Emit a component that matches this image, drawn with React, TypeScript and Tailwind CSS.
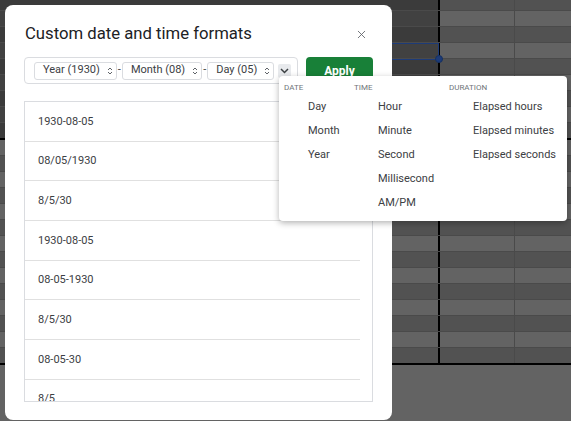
import { X } from "lucide-react";

const FONT = { fontFamily: "Roboto, 'Noto Sans', Arial, sans-serif" };

const formats = [
    "1930-08-05",
    "08/05/1930",
    "8/5/30",
    "1930-08-05",
    "08-05-1930",
    "8/5/30",
    "08-05-30",
    "8/5",
];

const menu = [
    { title: "DATE", width: "w-[70px]", items: ["Day", "Month", "Year"] },
    { title: "TIME", width: "w-[95px]", items: ["Hour", "Minute", "Second", "Millisecond", "AM/PM"] },
    { title: "DURATION", width: "w-[110px]", items: ["Elapsed hours", "Elapsed minutes", "Elapsed seconds"] },
];

function UpDown() {
    return (
        <svg width="6" height="10" viewBox="0 0 6 10" fill="none" stroke="#5f6368" strokeWidth="1" className="ml-[7px] shrink-0">
            <path d="M1 4 L3 2 L5 4" />
            <path d="M1 6 L3 8 L5 6" />
        </svg>
    );
}

function Chip({ label }: { label: string }) {
    return (
        <div className="flex shrink-0 items-center h-[18px] pl-[8px] pr-[3px] border border-[#dadce0] rounded-[3px] text-[11px] text-[#3c4043] bg-white whitespace-nowrap">
            <span>{label}</span>
            <UpDown />
        </div>
    );
}

// dimmed spreadsheet behind the modal
function SheetBackground() {
    const rows = Array.from({ length: 23 }, (_, i) => i);
    return (
        <div className="absolute inset-0 flex flex-col bg-[#636363]">
            {rows.map(i => {
                const light = i % 2 === 1;
                const frozen = i <= 8;
                const heavy = i === 8 || i === 22;
                const h = i === 0 ? "h-[11px]" : heavy ? "h-[17px]" : "h-[16px]";
                const border = heavy ? "border-b-2 border-black" : "border-b border-[#4a4a4a]";
                const leftBg = frozen
                    ? (light ? "bg-[#414141]" : "bg-[#3b3b3b]")
                    : (light ? "bg-[#636363]" : "bg-[#525252]");
                const rightBg = light ? "bg-[#636363]" : "bg-[#525252]";
                return (
                    <div key={i} className={`flex shrink-0 ${h} ${border}`}>
                        <div className={`w-[438px] ${leftBg}`} />
                        <div className="w-[2px] bg-black" />
                        <div className={`w-[75px] border-r border-[#4a4a4a] ${rightBg}`} />
                        <div className={`flex-1 ${rightBg}`} />
                    </div>
                );
            })}
            <div className="flex-1 bg-[#636363]" />
            {/* selected cell */}
            <div className="absolute left-[300px] top-[43px] w-[139px] h-[17px] border border-[#1d3b78]" />
            <div className="absolute left-[435px] top-[55px] w-[8px] h-[8px] rounded-full bg-[#1d3b78] border border-[#16305f]" />
        </div>
    );
}

export default function App() {
    return (
        <div className="relative w-[571px] h-[421px] overflow-hidden" style={FONT}>
            <SheetBackground />

            {/* Dialog */}
            <div className="absolute left-[5px] top-[5px] w-[387px] h-[415px] bg-white rounded-[8px] px-[19px] pt-[17px] flex flex-col">
                <div className="flex items-center justify-between h-[24px]">
                    <h1 className="ml-[1px] text-[16.7px] leading-[24px] text-[#202124]">Custom date and time formats</h1>
                    <X size={13} strokeWidth={1.6} color="#5f6368" className="mr-[5px]" />
                </div>

                <div className="flex items-start gap-[8px] mt-[11px]">
                    <div className="flex items-center shrink-0 w-[274px] h-[27px] border border-[#dadce0] rounded-[4px] pl-[9px]">
                        <Chip label="Year (1930)" />
                        <span className="text-[11px] text-[#3c4043] mx-[1px]">-</span>
                        <Chip label="Month (08)" />
                        <span className="text-[11px] text-[#3c4043] mx-[1px]">-</span>
                        <Chip label="Day (05)" />
                        <div className="ml-[4px] shrink-0 w-[13px] h-[14px] bg-[#e8eaed] rounded-[2px] flex items-center justify-center">
                            <svg width="9" height="6" viewBox="0 0 9 6" fill="none" stroke="#3c4043" strokeWidth="1.5">
                                <path d="M1 1 L4.5 4.5 L8 1" />
                            </svg>
                        </div>
                    </div>
                    <button className="w-[67px] h-[27px] bg-[#188038] rounded-[4px] text-white text-[12px] font-bold">
                        Apply
                    </button>
                </div>

                <div className="mt-[17px] w-[349px] h-[301px] border border-[#dadce0] overflow-hidden">
                    {formats.map((f, i) => (
                        <div
                            key={i}
                            className="w-[335px] h-[39.7px] border-b border-[#e0e0e0] flex items-center pl-[13px] pt-[1px] text-[11px] text-[#3c4043]"
                        >
                            {f}
                        </div>
                    ))}
                </div>
            </div>

            {/* Insert format menu */}
            <div className="absolute left-[279px] top-[76px] w-[288px] h-[145px] bg-white rounded-[4px] shadow-[0_2px_6px_rgba(0,0,0,0.3)] pl-[5px] pt-[6px] flex">
                {menu.map(col => (
                    <div key={col.title} className={`${col.width} flex flex-col`}>
                        <div className="h-[12px] leading-[12px] text-[8px] text-[#70757a] mb-[1px]">{col.title}</div>
                        {col.items.map(item => (
                            <div key={item} className="h-[24px] flex items-center pl-[24px] text-[11px] text-[#3c4043] whitespace-nowrap">
                                {item}
                            </div>
                        ))}
                    </div>
                ))}
            </div>
        </div>
    );
}
